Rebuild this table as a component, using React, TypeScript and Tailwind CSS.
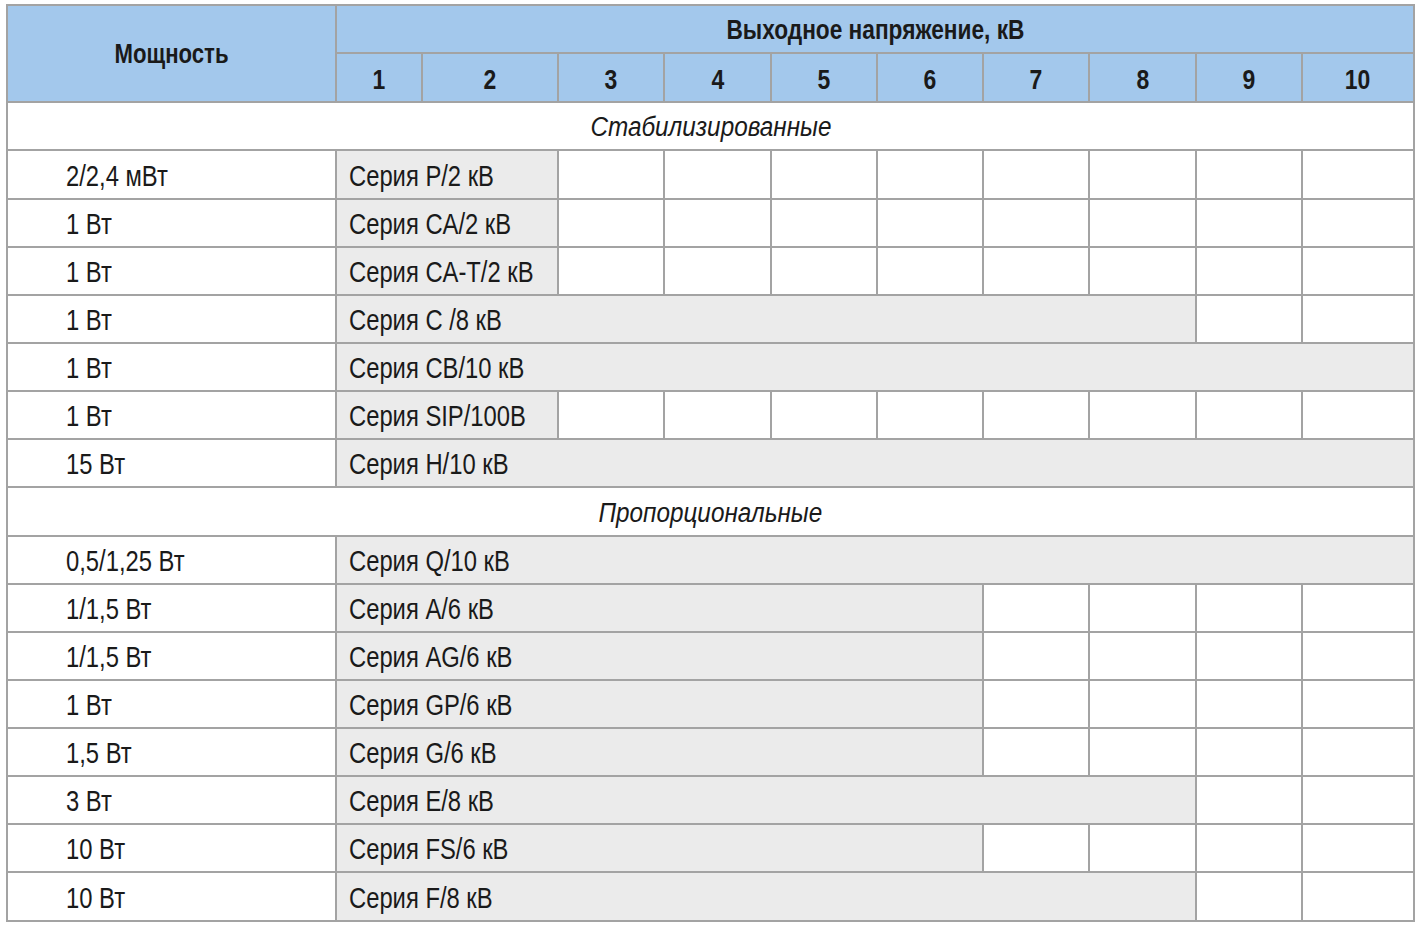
const cols = [329, 86, 136, 106, 107, 106, 106, 106, 107, 106, 112];

type Row = { power: string; series: string; span: number; tall?: boolean };

const stabilized: Row[] = [
  { power: "2/2,4 мВт", series: "Серия P/2 кВ", span: 2, tall: true },
  { power: "1 Вт", series: "Серия CA/2 кВ", span: 2 },
  { power: "1 Вт", series: "Серия CA-T/2 кВ", span: 2 },
  { power: "1 Вт", series: "Серия C /8 кВ", span: 8 },
  { power: "1 Вт", series: "Серия CB/10 кВ", span: 10 },
  { power: "1 Вт", series: "Серия SIP/100B", span: 2 },
  { power: "15 Вт", series: "Серия H/10 кВ", span: 10 },
];

const proportional: Row[] = [
  { power: "0,5/1,25 Вт", series: "Серия Q/10 кВ", span: 10 },
  { power: "1/1,5 Вт", series: "Серия A/6 кВ", span: 6 },
  { power: "1/1,5 Вт", series: "Серия AG/6 кВ", span: 6 },
  { power: "1 Вт", series: "Серия GP/6 кВ", span: 6 },
  { power: "1,5 Вт", series: "Серия G/6 кВ", span: 6 },
  { power: "3 Вт", series: "Серия E/8 кВ", span: 8 },
  { power: "10 Вт", series: "Серия FS/6 кВ", span: 6 },
  { power: "10 Вт", series: "Серия F/8 кВ", span: 8, tall: true },
];

const cell = "border-2 border-[#a3a3a3] p-0";

// narrow glyphs: Arial metrics squeezed to look like a condensed grotesk
function Narrow({ children, center }: { children: React.ReactNode; center?: boolean }) {
  return (
    <span
      className={`inline-block whitespace-nowrap scale-x-[0.82] ${center ? "origin-center" : "origin-left"}`}
    >
      {children}
    </span>
  );
}

function DataRow({ row }: { row: Row }) {
  return (
    <tr className={row.tall ? "h-[49px]" : "h-[48px]"}>
      <td className={`${cell} pl-[58px] pt-[3px] text-left`}>
        <Narrow>{row.power}</Narrow>
      </td>
      <td colSpan={row.span} className={`${cell} bg-[#ebebeb] pl-[12px] pt-[3px] text-left`}>
        <Narrow>{row.series}</Narrow>
      </td>
      {Array.from({ length: 10 - row.span }).map((_, i) => (
        <td key={i} className={cell}></td>
      ))}
    </tr>
  );
}

function SectionRow({ title, tall }: { title: string; tall?: boolean }) {
  return (
    <tr className={tall ? "h-[49px]" : "h-[48px]"}>
      <td colSpan={11} className={`${cell} pt-[3px] text-center text-[27px] italic`}>
        <span className="inline-block whitespace-nowrap scale-x-[0.9] origin-center">{title}</span>
      </td>
    </tr>
  );
}

export default function App() {
  return (
    <div className="min-h-screen bg-white pt-[4px] pl-[6px]">
      <table
        className="w-[1409px] table-fixed border-collapse text-[29px] leading-none text-[#1a1a1a]"
        style={{ fontFamily: '"Liberation Sans", Arial, sans-serif' }}
      >
        <colgroup>
          {cols.map((w, i) => (
            <col key={i} style={{ width: w }} />
          ))}
        </colgroup>
        <thead>
          <tr className="h-[48px] bg-[#a3c8ec]">
            <th rowSpan={2} className={`${cell} pt-[2px] text-[27px] font-bold`}>
              <Narrow center>Мощность</Narrow>
            </th>
            <th colSpan={10} className={`${cell} pt-[3px] text-[27px] font-bold`}>
              <span className="inline-block whitespace-nowrap scale-x-[0.84] origin-center">
                Выходное напряжение, кВ
              </span>
            </th>
          </tr>
          <tr className="h-[49px] bg-[#a3c8ec]">
            {[1, 2, 3, 4, 5, 6, 7, 8, 9, 10].map((n) => (
              <th key={n} className={`${cell} pt-[4px] text-[28px] font-bold`}>
                <Narrow center>{n}</Narrow>
              </th>
            ))}
          </tr>
        </thead>
        <tbody>
          <SectionRow title="Стабилизированные" />
          {stabilized.map((r, i) => (
            <DataRow key={i} row={r} />
          ))}
          <SectionRow title="Пропорциональные" tall />
          {proportional.map((r, i) => (
            <DataRow key={i} row={r} />
          ))}
        </tbody>
      </table>
    </div>
  );
}
